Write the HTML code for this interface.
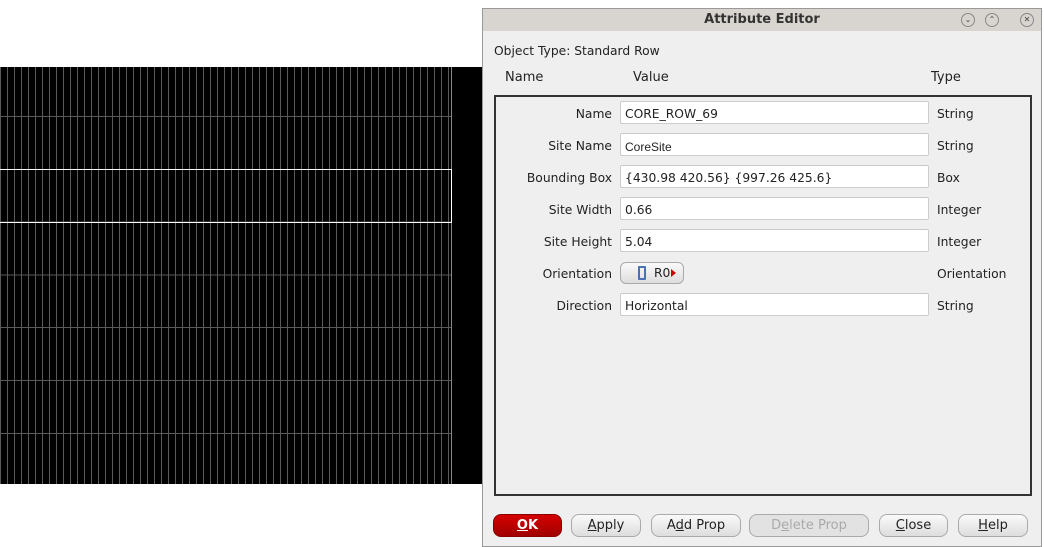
<!DOCTYPE html><html><head><style>
*{margin:0;padding:0;box-sizing:border-box}
body{width:1044px;height:547px;background:#fff;position:relative;overflow:hidden;font-family:"DejaVu Sans","Liberation Sans",sans-serif;font-size:12.3px;color:#222}
.grid{position:absolute;left:0;top:67px;width:482px;height:417px;background:#000}
.g{position:absolute;left:0;top:0;width:452px;height:417px;
background-image:repeating-linear-gradient(90deg,#5a5a5a 0 1px,transparent 1px 7px),repeating-linear-gradient(180deg,transparent 0 49px,#5a5a5a 49px 50px,transparent 50px 52.8px);border-right:1px solid #888}
.hl{position:absolute;left:0;top:102px;width:452px;height:54px;border:1px solid #fff;border-left:none}
.dlg{position:absolute;left:482px;top:8px;width:560px;height:539px;background:#efefef;border:1px solid #999}
.title{height:22px;background:#d8d5d1;text-align:center;font-weight:bold;font-size:13px;line-height:22px;color:#333}
.ctl{position:absolute;top:4px;width:14px;height:14px;border:1px solid #888;border-radius:50%;font-size:8px;line-height:12px;text-align:center;color:#444}
.abs{position:absolute}
.box{position:absolute;left:11px;top:86px;width:538px;height:401px;border:2px solid #333;background:#efefef}
.lbl{position:absolute;width:116px;text-align:right}
.inp{position:absolute;left:124px;width:309px;height:23px;background:#fff;border:1px solid #ccc;border-radius:2px;padding:5px 4px 0;line-height:15px}
.typ{position:absolute;left:441px}
.btn{position:absolute;top:505px;height:23px;border:1px solid #aaa;border-radius:8px;background:linear-gradient(#fafafa,#ddd);text-align:center;line-height:21px;font-size:13px}
u{text-decoration:underline}
</style></head><body>
<div class="grid"><div class="g"></div><div class="hl"></div></div>
<div class="dlg">
<div class="title">Attribute Editor</div>
<div class="ctl" style="left:478px">⌄</div><div class="ctl" style="left:502px">⌃</div><div class="ctl" style="left:537px">✕</div>
<div class="abs" style="left:11px;top:35px">Object Type: Standard Row</div>
<div class="abs" style="left:22px;top:61px;font-size:13px">Name</div>
<div class="abs" style="left:150px;top:61px;font-size:13px">Value</div>
<div class="abs" style="left:448px;top:61px;font-size:13px">Type</div>
<div class="box">
<div class="lbl" style="top:10px">Name</div><div class="inp" style="top:4px">CORE_ROW_69</div><div class="typ" style="top:10px">String</div>
<div class="lbl" style="top:42px">Site Name</div><div class="inp" style="top:36px;font-family:'Liberation Sans',sans-serif;font-size:12px;padding-top:6px">CoreSite</div><div class="typ" style="top:42px">String</div>
<div class="lbl" style="top:74px">Bounding Box</div><div class="inp" style="top:68px">{430.98 420.56} {997.26 425.6}</div><div class="typ" style="top:74px">Box</div>
<div class="lbl" style="top:106px">Site Width</div><div class="inp" style="top:100px">0.66</div><div class="typ" style="top:106px">Integer</div>
<div class="lbl" style="top:138px">Site Height</div><div class="inp" style="top:132px">5.04</div><div class="typ" style="top:138px">Integer</div>
<div class="lbl" style="top:170px">Orientation</div>
<div class="abs" style="left:124px;top:165px;width:64px;height:22px;border:1px solid #aaa;border-radius:6px;background:linear-gradient(#fafafa,#ddd)"><div class="abs" style="left:17px;top:3px;width:8px;height:14px;border:2px solid #4a72b0;border-radius:1px"></div><div class="abs" style="left:33px;top:3px">R0</div><div class="abs" style="left:50px;top:6px;border-left:5px solid #c00;border-top:4px solid transparent;border-bottom:4px solid transparent"></div></div>
<div class="typ" style="top:170px">Orientation</div>
<div class="lbl" style="top:202px">Direction</div><div class="inp" style="top:196px">Horizontal</div><div class="typ" style="top:202px">String</div>
</div>
<div class="btn" style="left:10px;width:69px;background:linear-gradient(#d40000,#a00000);border-color:#800;color:#fff;font-weight:bold"><u>O</u>K</div>
<div class="btn" style="left:88px;width:70px"><u>A</u>pply</div>
<div class="btn" style="left:168px;width:90px">A<u>d</u>d Prop</div>
<div class="btn" style="left:266px;width:120px;color:#aaa;background:#e2e2e2">D<u>e</u>lete Prop</div>
<div class="btn" style="left:396px;width:69px"><u>C</u>lose</div>
<div class="btn" style="left:475px;width:70px"><u>H</u>elp</div>
</div>
</body></html>
